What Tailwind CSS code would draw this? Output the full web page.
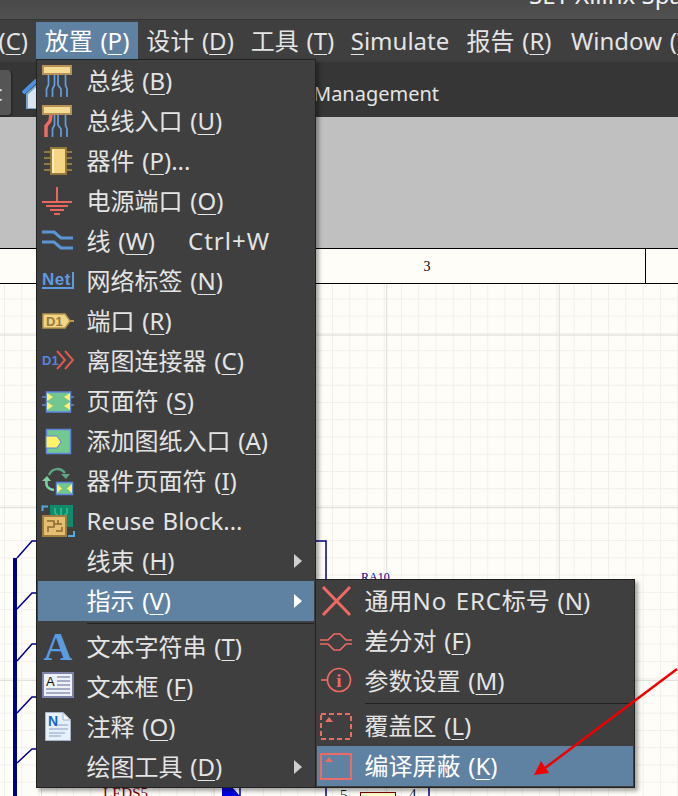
<!DOCTYPE html>
<html lang="zh-CN">
<head>
<meta charset="UTF-8">
<title>放置菜单</title>
<script src="https://cdn.jsdelivr.net/npm/@tailwindcss/browser@4"></script>
</head>
<body class="bg-[#fffdf8]">
<div class="relative w-[678px] h-[796px] overflow-hidden flex flex-col font-['Noto_Sans','Noto_Sans_CJK_SC',sans-serif] text-[#e4e4e4]">

    <!-- title bar -->
    <div class="h-[20px] shrink-0 bg-gradient-to-b from-[#4a4a4a] to-[#505050] border-b border-[#333] overflow-hidden relative">
        <div class="absolute left-[529px] bottom-[9px] text-[24px] leading-[30px] whitespace-nowrap text-[#f0f0f0]">SET Xilinx Spartan</div>
    </div>

    <!-- menu bar -->
    <div class="h-[42px] shrink-0 bg-[#3f3f3f] flex items-start pt-[2px] text-[24px] whitespace-nowrap overflow-hidden [word-spacing:1.5px]">
        <div class="w-[36px] shrink-0 h-[37px] flex justify-end items-center pr-[8px] overflow-hidden"><span>(<span class="underline underline-offset-4 decoration-1">C</span>)</span></div>
        <div class="w-[102px] shrink-0 h-[37px] flex justify-center items-center bg-[#5f82a3] text-white"><span>放置 (<span class="underline underline-offset-4 decoration-1">P</span>)</span></div>
        <div class="w-[104px] shrink-0 h-[37px] flex justify-center items-center"><span>设计 (<span class="underline underline-offset-4 decoration-1">D</span>)</span></div>
        <div class="w-[101px] shrink-0 h-[37px] flex justify-center items-center"><span>工具 (<span class="underline underline-offset-4 decoration-1">T</span>)</span></div>
        <div class="w-[114px] shrink-0 h-[37px] flex justify-center items-center"><span><span class="underline underline-offset-4 decoration-1">S</span>imulate</span></div>
        <div class="w-[104px] shrink-0 h-[37px] flex justify-center items-center"><span>报告 (<span class="underline underline-offset-4 decoration-1">R</span>)</span></div>
        <div class="pl-[10px] shrink-0 h-[37px] flex items-center"><span>Window (<span class="underline underline-offset-4 decoration-1">W</span>)</span></div>
    </div>

    <!-- toolbar -->
    <div class="h-[55px] shrink-0 bg-[#363636] flex items-end relative">
        <div class="w-[13px] h-[47px] bg-[#555] rounded-r-[5px] border-r-2 border-b-2 border-[#2b2b2b] text-[22px] leading-[44px] overflow-hidden">
            <span class="-ml-[8px] block">c</span>
        </div>
        <svg class="ml-[9px] mb-[8px]" width="16" height="30" viewBox="0 0 16 30">
            <path d="M1 14 L15 1" stroke="#4a92e6" stroke-width="4" fill="none"/>
            <path d="M5 15 L15 6 V30 H5 Z" fill="#d9e6f2" stroke="#7ba6c8" stroke-width="2"/>
        </svg>
        <div class="absolute left-[313px] top-[17px] text-[20px] leading-[30px] whitespace-nowrap">Management</div>
    </div>

    <!-- gray band -->
    <div class="h-[131px] shrink-0 bg-[#c0c0c0]"></div>

    <!-- sheet ruler -->
    <div class="h-[36px] shrink-0 bg-[#fffdf8] border-y border-black flex">
        <div class="w-[646px] border-r border-black flex justify-center items-center pl-[209px] font-['Liberation_Serif',serif] text-[14px] text-black">3</div>
    </div>

    <!-- schematic canvas -->
    <svg class="shrink-0 block" width="678" height="512" viewBox="0 284 678 512">
        <defs>
            <pattern id="minor" x="4" y="5" width="17.26" height="17.26" patternUnits="userSpaceOnUse">
                <path d="M0.5 0V17.26M0 0.5H17.26" stroke="#f0efe9" stroke-width="1" fill="none"/>
            </pattern>
            <pattern id="major" x="41" y="162" width="172.6" height="172.6" patternUnits="userSpaceOnUse">
                <path d="M0.5 0V172.6M0 0.5H172.6" stroke="#dcdbd5" stroke-width="1" fill="none"/>
            </pattern>
        </defs>
        <rect x="0" y="284" width="678" height="512" fill="url(#minor)"/>
        <rect x="0" y="284" width="678" height="512" fill="url(#major)"/>
        <!-- bus and entries -->
        <path d="M15 558V796" stroke="#00008b" stroke-width="4" fill="none"/>
        <path d="M17 558L32 541H40M17 609L32 593H40M17 661L32 644H40M17 713L32 697H40M17 763L32 749H40" stroke="#00008b" stroke-width="1.5" fill="none"/>
        <path d="M310 541H326V582M326 786V796M429 786V796" stroke="#00008b" stroke-width="1.5" fill="none"/>
        <path d="M222 787H232L240 796H222Z" fill="#0000e0"/>
        <path d="M240 787V796" stroke="#00008b" stroke-width="1.5"/>
        <rect x="360.500" y="792.500" width="35" height="8" fill="#ffffc8" stroke="#800000"/>
        <text x="361" y="581" font-family="Liberation Serif" font-size="12" fill="#00008b">RA10</text>
        <text x="103" y="798" font-family="Liberation Serif" font-size="15" fill="#800000">LEDS5</text>
        <text x="340" y="800" font-family="Liberation Serif" font-size="15" fill="#111">5</text>
        <text x="409" y="799" font-family="Liberation Serif" font-size="15" fill="#111">4</text>
    </svg>

    <!-- place menu -->
    <div class="absolute left-[36px] top-[59px] w-[280px] bg-[#3f3f3f] border border-[#222] px-px pt-px shadow-[3px_3px_4px_rgba(0,0,0,0.35)] text-[24px] whitespace-nowrap [word-spacing:1.5px]">
        <div class="h-10 flex items-center">
            <div class="w-[48.5px] shrink-0 pl-[3px]">
                <svg class="block" width="36" height="32" viewBox="0 0 36 32">
                    <rect x="2" y="1" width="28" height="8" fill="#f4dc95" stroke="#b8915a" stroke-width="2"/>
                    <path d="M7.500 10V20L5.500 24V32M13.500 10V20L11.500 24V32M17 10V20L20 24V32M24.500 10V20L26 24V32" stroke="#659fe0" stroke-width="1.700" fill="none"/>
                </svg>
            </div>
            <span>总线 (<span class="underline underline-offset-4 decoration-1">B</span>)</span>
        </div>
        <div class="h-10 flex items-center">
            <div class="w-[48.5px] shrink-0 pl-[3px]">
                <svg class="block" width="36" height="32" viewBox="0 0 36 32">
                    <rect x="2" y="1" width="28" height="8" fill="#f4dc95" stroke="#b8915a" stroke-width="2"/>
                    <path d="M10 10L9 16L5 21V32" stroke="#f2695f" stroke-width="3.500" fill="none"/>
                    <path d="M13.500 10V20L11.500 24V32M17 10V20L20 24V32M24.500 10V20L26 24V32" stroke="#659fe0" stroke-width="1.700" fill="none"/>
                </svg>
            </div>
            <span>总线入口 (<span class="underline underline-offset-4 decoration-1">U</span>)</span>
        </div>
        <div class="h-10 flex items-center">
            <div class="w-[48.5px] shrink-0 pl-[3px]">
                <svg class="block" width="36" height="32" viewBox="0 0 36 32">
                    <path d="M3 7H31M3 13H31M3 19H31M3 25H31" stroke="#8f7b40" stroke-width="2"/>
                    <rect x="10" y="3" width="15" height="26" fill="#f6d585" stroke="#95793a" stroke-width="2"/>
                    <path d="M12 4V28" stroke="#fcecc0" stroke-width="2"/>
                </svg>
            </div>
            <span>器件 (<span class="underline underline-offset-4 decoration-1">P</span>)...</span>
        </div>
        <div class="h-10 flex items-center">
            <div class="w-[48.5px] shrink-0 pl-[3px]">
                <svg class="block" width="36" height="32" viewBox="0 0 36 32">
                    <path d="M16 2V17M1 17H31M5 21H27M9 25H23M13 29H19" stroke="#ea675d" stroke-width="2" fill="none"/>
                </svg>
            </div>
            <span>电源端口 (<span class="underline underline-offset-4 decoration-1">O</span>)</span>
        </div>
        <div class="h-10 flex items-center">
            <div class="w-[48.5px] shrink-0 pl-[3px]">
                <svg class="block" width="36" height="32" viewBox="0 0 36 32">
                    <path d="M1 7H13L20 13H32M1 17H13L20 23H32" stroke="#5b95d6" stroke-width="3" fill="none"/>
                </svg>
            </div>
            <span>线 (<span class="underline underline-offset-4 decoration-1">W</span>)</span>
            <span class="ml-[33px] tracking-[1px]">Ctrl+W</span>
        </div>
        <div class="h-10 flex items-center">
            <div class="w-[48.5px] shrink-0 pl-[3px]">
                <svg class="block" width="36" height="32" viewBox="0 0 36 32">
                    <text x="1" y="20" font-family="Liberation Sans" font-weight="700" font-size="17" letter-spacing="0.5" fill="#5e9ae2">Net</text>
                    <path d="M1 23H32V7" stroke="#5e9ae2" stroke-width="2" fill="none"/>
                </svg>
            </div>
            <span>网络标签 (<span class="underline underline-offset-4 decoration-1">N</span>)</span>
        </div>
        <div class="h-10 flex items-center">
            <div class="w-[48.5px] shrink-0 pl-[3px]">
                <svg class="block" width="36" height="32" viewBox="0 0 36 32">
                    <path d="M29 16H33" stroke="#b8964f" stroke-width="2"/>
                    <path d="M2 9H24L29 16L24 23H2Z" fill="#f0d587" stroke="#b8964f" stroke-width="1.500"/>
                    <text x="5" y="21" font-family="Liberation Sans" font-weight="700" font-size="13" fill="#9a7a38">D1</text>
                </svg>
            </div>
            <span>端口 (<span class="underline underline-offset-4 decoration-1">R</span>)</span>
        </div>
        <div class="h-10 flex items-center">
            <div class="w-[48.5px] shrink-0 pl-[3px]">
                <svg class="block" width="36" height="32" viewBox="0 0 36 32">
                    <text x="1" y="20" font-family="Liberation Sans" font-weight="700" font-size="13" fill="#5a82d8">D1</text>
                    <path d="M16 6L24 15L16 24M24 6L32 15L24 24" stroke="#dc5a50" stroke-width="2" fill="none"/>
                </svg>
            </div>
            <span>离图连接器 (<span class="underline underline-offset-4 decoration-1">C</span>)</span>
        </div>
        <div class="h-10 flex items-center">
            <div class="w-[48.5px] shrink-0 pl-[3px]">
                <svg class="block" width="36" height="32" viewBox="0 0 36 32">
                    <path d="M1 12H5M1 20H5M29 12H33M29 20H33" stroke="#6488dc" stroke-width="1.500"/>
                    <rect x="5.500" y="7" width="24" height="20" fill="#72c690" stroke="#5f84dc" stroke-width="1.500"/>
                    <path d="M6 8L12 12L6 16ZM6 17L12 21L6 25ZM29 8L23 12L29 16ZM29 17L23 21L29 25Z" fill="#fff36a"/>
                </svg>
            </div>
            <span>页面符 (<span class="underline underline-offset-4 decoration-1">S</span>)</span>
        </div>
        <div class="h-10 flex items-center">
            <div class="w-[48.5px] shrink-0 pl-[3px]">
                <svg class="block" width="36" height="32" viewBox="0 0 36 32">
                    <rect x="5.500" y="4.500" width="24" height="24" fill="#74c98f" stroke="#5f84dc" stroke-width="1.500"/>
                    <path d="M5 11H16L20 17L16 23H5Z" fill="#fff36a" stroke="#5f84dc"/>
                </svg>
            </div>
            <span>添加图纸入口 (<span class="underline underline-offset-4 decoration-1">A</span>)</span>
        </div>
        <div class="h-10 flex items-center">
            <div class="w-[48.5px] shrink-0 pl-[3px]">
                <svg class="block" width="36" height="32" viewBox="0 0 36 32">
                    <path d="M8 10C11 3 19 2 24 8" stroke="#5fa585" stroke-width="2.500" fill="none"/>
                    <path d="M20 9H29L25 14Z" fill="#5fa585"/>
                    <path d="M6 14C4 20 6 24 13 25" stroke="#7fd0a0" stroke-width="2.500" fill="none"/>
                    <path d="M1 16L6 11L10 16Z" fill="#7fd0a0"/>
                    <rect x="15.500" y="17.500" width="16" height="12" fill="#72c690" stroke="#5f84dc" stroke-width="1.500"/>
                    <path d="M16 19L21 23.500L16 28ZM31 19L26 23.500L31 28Z" fill="#fff36a"/>
                </svg>
            </div>
            <span>器件页面符 (<span class="underline underline-offset-4 decoration-1">I</span>)</span>
        </div>
        <div class="h-10 flex items-center">
            <div class="w-[48.5px] shrink-0 pl-[3px]">
                <svg class="block" width="36" height="32" viewBox="0 0 36 32">
                    <path d="M1.500 6V1.500H7M33 26V31H27" stroke="#55a8e0" stroke-width="2" fill="none"/>
                    <rect x="9" y="0" width="23" height="22" fill="#0f8a6a"/>
                    <path d="M14 3V8L18 12M20 3V12M26 3V8L22 12" stroke="#35c08f" stroke-width="1.500" fill="none"/>
                    <rect x="2" y="11" width="23" height="20" fill="#e6be72" stroke="#9c7d3f" stroke-width="2"/>
                    <path d="M6 16H13V22H7V27M13 19H21M17 15V19M15 26H21V22" stroke="#8a6a30" stroke-width="1.500" fill="none"/>
                </svg>
            </div>
            <span>Reuse Block...</span>
        </div>
        <div class="h-10 flex items-center">
            <div class="w-[48.5px] shrink-0"></div>
            <span>线束 (<span class="underline underline-offset-4 decoration-1">H</span>)</span>
            <svg class="ml-auto mr-[12px]" width="8" height="14" viewBox="0 0 8 14"><path d="M0 0L8 7L0 14Z" fill="#cfcfcf"/></svg>
        </div>
        <div class="h-10 flex items-center bg-[#5f82a3] text-white">
            <div class="w-[48.5px] shrink-0"></div>
            <span>指示 (<span class="underline underline-offset-4 decoration-1">V</span>)</span>
            <svg class="ml-auto mr-[12px]" width="8" height="14" viewBox="0 0 8 14"><path d="M0 0L8 7L0 14Z" fill="#ffffff"/></svg>
        </div>
        <div class="h-[6px] pt-[2px] pl-[49px]"><div class="h-px bg-[#222]"></div></div>
        <div class="h-10 flex items-center">
            <div class="w-[48.5px] shrink-0 pl-[3px]">
                <svg class="block" width="36" height="32" viewBox="0 0 36 32">
                    <text x="17" y="29" text-anchor="middle" font-family="Liberation Serif" font-weight="700" font-size="40" fill="#5b9be0">A</text>
                </svg>
            </div>
            <span>文本字符串 (<span class="underline underline-offset-4 decoration-1">T</span>)</span>
        </div>
        <div class="h-10 flex items-center">
            <div class="w-[48.5px] shrink-0 pl-[3px]">
                <svg class="block" width="36" height="32" viewBox="0 0 36 32">
                    <rect x="2" y="2" width="30" height="24" fill="#eff1f8" stroke="#7d82a8" stroke-width="2"/>
                    <text x="5" y="15" font-family="Liberation Sans" font-size="13" fill="#111">A</text>
                    <path d="M16 6H29M16 10H29M16 14H29M5 18H29M5 22H29" stroke="#8f95b5" stroke-width="1.500"/>
                </svg>
            </div>
            <span>文本框 (<span class="underline underline-offset-4 decoration-1">F</span>)</span>
        </div>
        <div class="h-10 flex items-center">
            <div class="w-[48.5px] shrink-0 pl-[3px]">
                <svg class="block" width="36" height="32" viewBox="0 0 36 32">
                    <path d="M4.500 1.500H22L29.500 9V29.500H4.500Z" fill="#e4f1fb" stroke="#a8b4c8"/>
                    <path d="M22 1.500V9H29.500Z" fill="#f8f8f8" stroke="#a8b4c8"/>
                    <text x="7" y="15" font-family="Liberation Sans" font-weight="700" font-size="14" fill="#1a66c8">N</text>
                    <path d="M17 14H27M8 18H27M8 22H24M8 25H20" stroke="#8f9fc0" stroke-width="1"/>
                </svg>
            </div>
            <span>注释 (<span class="underline underline-offset-4 decoration-1">O</span>)</span>
        </div>
        <div class="h-10 flex items-center">
            <div class="w-[48.5px] shrink-0"></div>
            <span>绘图工具 (<span class="underline underline-offset-4 decoration-1">D</span>)</span>
            <svg class="ml-auto mr-[12px]" width="8" height="14" viewBox="0 0 8 14"><path d="M0 0L8 7L0 14Z" fill="#cfcfcf"/></svg>
        </div>
    </div>

    <!-- directives submenu -->
    <div class="absolute left-[315px] top-[579px] w-[320px] bg-[#3f3f3f] border border-[#222] px-px py-px shadow-[3px_3px_4px_rgba(0,0,0,0.35)] text-[24px] whitespace-nowrap [word-spacing:1.5px]">
        <div class="h-10 flex items-center">
            <div class="w-[47.5px] shrink-0 pl-[2px]">
                <svg class="block" width="36" height="32" viewBox="0 0 36 32">
                    <path d="M4 2L31 30M31 2L4 30" stroke="#ee6a62" stroke-width="3" fill="none"/>
                </svg>
            </div>
            <span>通用<span class="tracking-[0.9px]">No ERC</span>标号 (<span class="underline underline-offset-4 decoration-1">N</span>)</span>
        </div>
        <div class="h-10 flex items-center">
            <div class="w-[47.5px] shrink-0 pl-[2px]">
                <svg class="block" width="36" height="32" viewBox="0 0 36 32">
                    <path d="M1 15H9L15 9H21L27 15H33M1 19H9L15 25H21L27 19H33" stroke="#ee6a62" stroke-width="1.700" fill="none"/>
                </svg>
            </div>
            <span>差分对 (<span class="underline underline-offset-4 decoration-1">F</span>)</span>
        </div>
        <div class="h-10 flex items-center">
            <div class="w-[47.5px] shrink-0 pl-[2px]">
                <svg class="block" width="36" height="32" viewBox="0 0 36 32">
                    <circle cx="20" cy="15" r="11.500" fill="none" stroke="#ee6a62" stroke-width="1.700"/>
                    <path d="M2 15H8" stroke="#ee6a62" stroke-width="1.700"/>
                    <text x="20" y="22" text-anchor="middle" font-family="Liberation Serif" font-weight="700" font-size="19" fill="#ee6a62">i</text>
                </svg>
            </div>
            <span>参数设置 (<span class="underline underline-offset-4 decoration-1">M</span>)</span>
        </div>
        <div class="h-[5px] pt-[2px] pl-[48px]"><div class="h-px bg-[#222]"></div></div>
        <div class="h-10 flex items-center">
            <div class="w-[47.5px] shrink-0 pl-[2px]">
                <svg class="block" width="36" height="32" viewBox="0 0 36 32">
                    <rect x="2" y="4" width="30" height="25" fill="none" stroke="#ee6a62" stroke-width="2" stroke-dasharray="5 3"/>
                    <path d="M6 12L10 7L14 12Z" fill="#ee6a62"/>
                </svg>
            </div>
            <span>覆盖区 (<span class="underline underline-offset-4 decoration-1">L</span>)</span>
        </div>
        <div class="h-10 flex items-center bg-[#5f82a3] text-white">
            <div class="w-[47.5px] shrink-0 pl-[2px]">
                <svg class="block" width="36" height="32" viewBox="0 0 36 32">
                    <rect x="2" y="4" width="30" height="25" fill="none" stroke="#ee6a62" stroke-width="2"/>
                    <path d="M6 12L10 7L14 12Z" fill="#ee6a62"/>
                </svg>
            </div>
            <span>编译屏蔽 (<span class="underline underline-offset-4 decoration-1">K</span>)</span>
        </div>
    </div>

    <!-- red annotation arrow -->
    <svg class="absolute left-0 top-0 pointer-events-none" width="678" height="796" viewBox="0 0 678 796">
        <path d="M677 669L545 768" stroke="#f00000" stroke-width="2.500" fill="none"/>
        <path d="M534 775L541 761L549 773Z" fill="#f00000"/>
    </svg>
</div>
</body>
</html>
